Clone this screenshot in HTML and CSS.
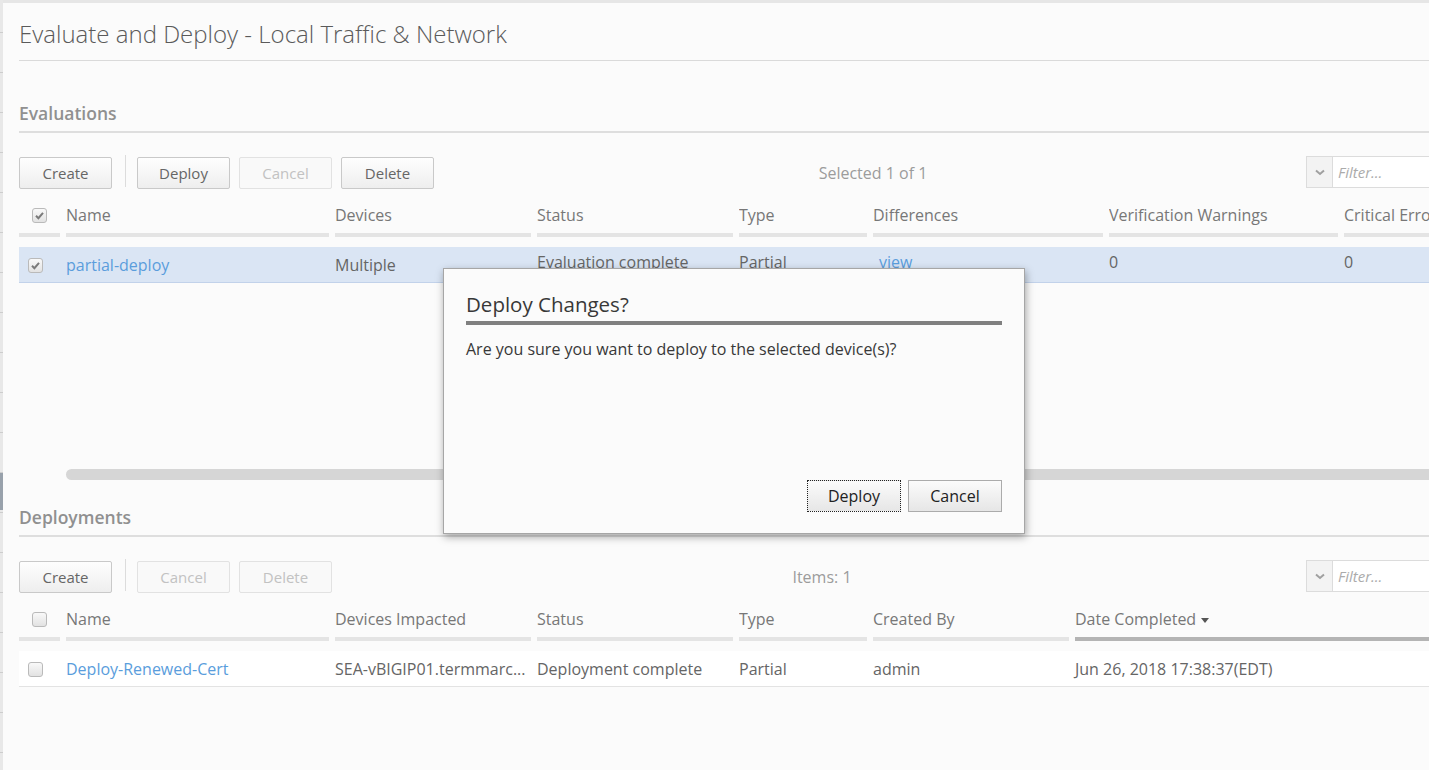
FILE: index.html
```html
<!DOCTYPE html>
<html lang="en">
<head>
<meta charset="utf-8">
<title>Evaluate and Deploy</title>
<link rel="stylesheet" href="styles.css">
</head>
<body>
<div class="shell">
  <div class="rail"><div class="rail-mark"></div></div>
  <main class="main">
    <div class="content">
      <h1 class="page-title">Evaluate and Deploy - Local Traffic &amp; Network</h1>

      <section class="panel">
        <h2 class="section-title">Evaluations</h2>
        <div class="toolbar">
          <div class="btn-group">
            <button class="btn">Create</button>
            <span class="sep"></span>
            <button class="btn">Deploy</button>
            <button class="btn" disabled>Cancel</button>
            <button class="btn">Delete</button>
          </div>
          <div class="count">Selected 1 of 1</div>
          <div class="filter">
            <span class="filter-drop"><svg width="10" height="7" viewBox="0 0 10 7"><path d="M1 1.5 L5 5 L9 1.5" fill="none" stroke="#a0a0a0" stroke-width="2"/></svg></span>
            <span class="filter-input">Filter...</span>
          </div>
        </div>

        <div class="thead cols-eval">
          <div class="th th-check"><span class="cb"><svg width="13" height="13" viewBox="0 0 13 13"><path d="M3 6.8 L5.4 9.2 L10 3.8" fill="none" stroke="#7a7a7a" stroke-width="2"/></svg></span></div>
          <div class="th">Name</div>
          <div class="th">Devices</div>
          <div class="th">Status</div>
          <div class="th">Type</div>
          <div class="th">Differences</div>
          <div class="th">Verification Warnings</div>
          <div class="th">Critical Errors</div>
        </div>
        <div class="trow cols-eval selected">
          <div class="td td-check"><span class="cb"><svg width="13" height="13" viewBox="0 0 13 13"><path d="M3 6.8 L5.4 9.2 L10 3.8" fill="none" stroke="#7a7a7a" stroke-width="2"/></svg></span></div>
          <div class="td"><a class="link">partial-deploy</a></div>
          <div class="td">Multiple</div>
          <div class="td up">Evaluation complete</div>
          <div class="td up">Partial</div>
          <div class="td up diff"><a class="link">view</a></div>
          <div class="td up">0</div>
          <div class="td up">0</div>
        </div>
        <div class="hscroll"></div>
      </section>

      <section class="panel">
        <h2 class="section-title deployments">Deployments</h2>
        <div class="toolbar">
          <div class="btn-group">
            <button class="btn">Create</button>
            <span class="sep"></span>
            <button class="btn" disabled>Cancel</button>
            <button class="btn" disabled>Delete</button>
          </div>
          <div class="count">Items: 1</div>
          <div class="filter">
            <span class="filter-drop"><svg width="10" height="7" viewBox="0 0 10 7"><path d="M1 1.5 L5 5 L9 1.5" fill="none" stroke="#a0a0a0" stroke-width="2"/></svg></span>
            <span class="filter-input">Filter...</span>
          </div>
        </div>

        <div class="thead cols-dep">
          <div class="th th-check"><span class="cb"></span></div>
          <div class="th">Name</div>
          <div class="th">Devices Impacted</div>
          <div class="th">Status</div>
          <div class="th">Type</div>
          <div class="th">Created By</div>
          <div class="th sorted">Date Completed<span class="sort-caret"></span></div>
        </div>
        <div class="trow cols-dep plain">
          <div class="td td-check"><span class="cb"></span></div>
          <div class="td"><a class="link">Deploy-Renewed-Cert</a></div>
          <div class="td">SEA-vBIGIP01.termmarc...</div>
          <div class="td">Deployment complete</div>
          <div class="td">Partial</div>
          <div class="td">admin</div>
          <div class="td">Jun 26, 2018 17:38:37(EDT)</div>
        </div>
      </section>
    </div>
  </main>

  <div class="dialog" role="dialog">
    <div class="dialog-title">Deploy Changes?</div>
    <div class="dialog-msg">Are you sure you want to deploy to the selected device(s)?</div>
    <div class="dialog-actions">
      <button class="dbtn focused">Deploy</button>
      <button class="dbtn">Cancel</button>
    </div>
  </div>
</div>
</body>
</html>
```

FILE: styles.css
```css
* { box-sizing: border-box; }
html, body { margin: 0; height: 100%; }
body {
  background: #e6e6e6;
  font-family: "Open Sans", "Liberation Sans", sans-serif;
  color: #555;
  overflow: hidden;
}
.shell {
  position: relative;
  display: flex;
  width: 1429px;
  height: 770px;
}
.rail {
  width: 3px;
  flex: none;
  background-color: #e8e8e8;
  background-image: repeating-linear-gradient(to bottom, transparent 0 39px, #cdcdcd 39px 40px);
  background-position: 0 -7px;
}
.rail-mark {
  margin-top: 473px;
  height: 37px;
  background: #98a1ab;
}
.main {
  flex: 1;
  margin-top: 3px;
  background: #fbfbfb;
  overflow: hidden;
  padding-left: 16px;
}
.content { width: 1487px; }

.page-title {
  margin: 14px 0 0;
  padding-bottom: 9px;
  font-size: 24px;
  font-weight: 300;
  line-height: 34px;
  color: #5a5a5a;
  border-bottom: 1px solid #dadada;
}
.section-title {
  margin: 40px 0 0;
  padding-bottom: 6px;
  font-size: 17.5px;
  font-weight: 600;
  line-height: 24px;
  color: #909090;
  border-bottom: 2px solid #dedede;
}
.section-title.deployments { margin-top: 25px; }

.toolbar {
  margin-top: 24px;
  height: 32px;
  display: flex;
  align-items: center;
}
.btn-group { display: flex; align-items: center; }
.btn {
  width: 93px;
  height: 32px;
  padding: 0;
  font-family: inherit;
  font-size: 15px;
  color: #666;
  background: linear-gradient(#fefefe, #eeeeee);
  border: 1px solid #c9c9c9;
  border-radius: 2px;
}
.btn + .btn { margin-left: 9px; }
.btn:disabled {
  color: #c2c2c2;
  background: #f9f9f9;
  border-color: #e2e2e2;
}
.sep {
  width: 1px;
  height: 32px;
  margin: -4px 11px 0 13px;
  background: #dcdcdc;
}
.count {
  flex: 1;
  text-align: center;
  font-size: 16px;
  color: #9c9c9c;
  padding-left: 6px;
}
.filter {
  width: 200px;
  height: 32px;
  margin-top: -2px;
  display: flex;
  border: 1px solid #dcdcdc;
  background: #fff;
}
.filter-drop {
  width: 26px;
  display: flex;
  align-items: center;
  justify-content: center;
  background: #f3f3f3;
  border-right: 1px solid #dcdcdc;
}
.filter-input {
  flex: 1;
  padding-left: 5px;
  font-size: 15px;
  font-style: italic;
  line-height: 30px;
  color: #ababab;
}

.thead, .trow {
  display: grid;
  column-gap: 6px;
}
.cols-eval { grid-template-columns: 41px 263px 196px 196px 128px 230px 229px 1fr; }
.cols-dep { grid-template-columns: 41px 263px 196px 196px 128px 196px 1fr; }

.th {
  padding: 16px 0 8px;
  font-size: 16px;
  line-height: 20px;
  color: #777;
  white-space: nowrap;
  overflow: hidden;
  border-bottom: 4px solid #e4e4e4;
}
.th.sorted { border-bottom-color: #b4b4b4; }
.th-check { padding: 19px 0 0 13px; }
.sort-caret {
  display: inline-block;
  margin-left: 5px;
  vertical-align: middle;
  border-left: 4px solid transparent;
  border-right: 4px solid transparent;
  border-top: 5px solid #555;
}

.trow {
  margin-top: 10px;
  height: 36px;
  border-bottom: 1px solid #e3e3e3;
}
.trow.selected { background: #dae5f4; border-bottom-color: #c2d2ea; }
.trow.plain { background: #fff; }
.td {
  padding-top: 8px;
  font-size: 16px;
  line-height: 20px;
  color: #656565;
  white-space: nowrap;
}
.td.up { padding-top: 5px; }
.td.diff { padding-left: 6px; }
.td-check { padding: 11px 0 0 9px; }
.link { color: #5a9ddc; text-decoration: none; }

.cb {
  display: block;
  width: 15px;
  height: 15px;
  border: 1px solid #bababa;
  border-radius: 3px;
  background: linear-gradient(#f9f9f9, #e2e2e2);
}
.cb svg { display: block; }

.hscroll {
  margin: 186px 0 0 47px;
  height: 11px;
  border-radius: 6px;
  background: #d6d6d6;
}

.dialog {
  position: absolute;
  left: 443px;
  top: 268px;
  width: 582px;
  height: 266px;
  padding: 21px 22px 21px;
  display: flex;
  flex-direction: column;
  background: #fbfbfb;
  border: 1px solid #a6a6a6;
  box-shadow: 1px 3px 8px rgba(0, 0, 0, 0.35);
}
.dialog-title {
  font-size: 20.5px;
  line-height: 29px;
  color: #383838;
  padding-bottom: 2px;
  border-bottom: 4px solid #808080;
}
.dialog-msg {
  margin-top: 13px;
  font-size: 16px;
  line-height: 22px;
  color: #383838;
}
.dialog-actions {
  margin-top: auto;
  display: flex;
  justify-content: flex-end;
  gap: 7px;
}
.dbtn {
  width: 94px;
  height: 32px;
  padding: 0;
  font-family: inherit;
  font-size: 16px;
  color: #222;
  background: linear-gradient(#fbfbfb, #e6e6e6);
  border: 1px solid #ababab;
}
.dbtn.focused { border: 1px dotted #222; }
```
